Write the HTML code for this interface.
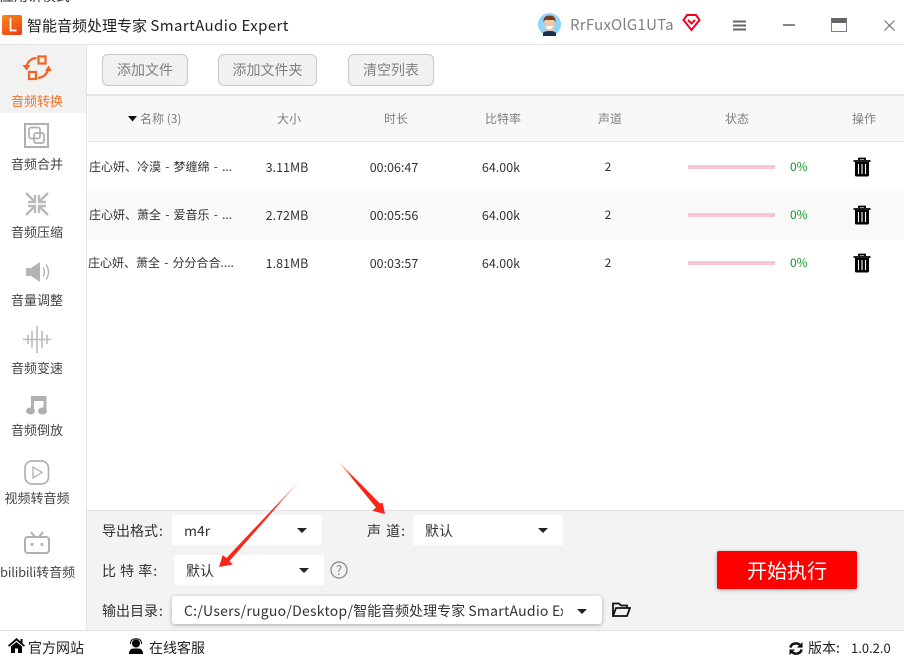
<!DOCTYPE html>
<html><head><meta charset="utf-8">
<style>
html,body{margin:0;padding:0;background:#fff}
#p{position:relative;width:904px;height:659px;overflow:hidden;background:#fff;font-family:"Noto Sans CJK SC","Liberation Sans",sans-serif;color:#333}
#p div,#p svg{position:absolute}
.t{white-space:nowrap;line-height:20px;height:20px}
.side{left:0;width:74px;text-align:center;font-size:13px;color:#444}
.th{top:109px;font-size:12px;color:#808080;text-align:center;width:60px}
.td{font-size:12px;color:#333;text-align:center}
.n{word-spacing:1.500px}
.m{font-size:12.500px}
.btn{top:54px;height:32px;background:#f1f1f1;border:1px solid #c8c8c8;border-radius:6px;box-sizing:border-box;text-align:center;line-height:31px;font-size:14px;color:#808080}
.sel{background:#fff;height:30px}
.lab{font-size:14px;color:#333}
.c{margin-left:1px}
.bar{left:688px;width:87px;height:4px;background:#f8c5d8}
.pc{left:790px;font-size:12px;color:#0a9a1a}
</style></head><body>
<div id="p">
<div class="t" style="left:0;top:-14px;font-size:14px;color:#333">应用讲模式</div>

<!-- title bar -->
<div style="left:2px;top:15px;width:20px;height:20px;background:linear-gradient(150deg,#f98a1c,#ee3a12);border-radius:2px"></div>
<svg style="left:2px;top:15px" width="20" height="20"><path d="M8.500 3V15.500H14.500" fill="none" stroke="#fff" stroke-width="1.700"/></svg>
<div class="t" style="left:27px;top:16px;font-size:15px;color:#222">智能音频处理专家 <span style="letter-spacing:.4px">SmartAudio Expert</span></div>

<svg style="left:538px;top:13px" width="23" height="23" viewBox="0 0 23 23">
<circle cx="11.500" cy="11.500" r="11.500" fill="#8fd4fb"/>
<path d="M5 23V20Q6 18 11.500 18T18 20V23Z" fill="#17304f"/>
<rect x="6.500" y="6" width="10" height="12" rx="4" fill="#f3c9a5"/>
<path d="M5.500 9Q5 2.500 11.500 2.500T17.500 9L16 7H7Z" fill="#7a3d1e"/>
<path d="M8 13H15Q14 16 11.500 16T8 13Z" fill="#fff"/>
</svg>
<div class="t" style="left:570px;top:15px;font-size:15px;color:#808080;letter-spacing:.25px">RrFuxOlG1UTa</div>
<svg style="left:682px;top:13px" width="19" height="19" viewBox="0 0 19 19"><path d="M5 2H14L17.500 7L9.500 17L1.500 7Z" fill="none" stroke="#f4001c" stroke-width="2"/><path d="M6 7L9.500 10.500L13 7" fill="none" stroke="#f4001c" stroke-width="2"/></svg>
<svg style="left:733px;top:20px" width="13" height="11"><path d="M0 1.500H13M0 5.500H13M0 9.500H13" stroke="#666" stroke-width="2"/></svg>
<div style="left:783px;top:24px;width:12px;height:2px;background:#888"></div>
<div style="left:831px;top:18px;width:16px;height:14px;box-sizing:border-box;border:1px solid #7a8290;border-top:5px solid #666"></div>
<svg style="left:884px;top:20px" width="11" height="11"><path d="M.5 .5L10.500 10.500M10.500 .5L.5 10.500" stroke="#777" stroke-width="1.200"/></svg>
<div style="left:0;top:44px;width:904px;height:1px;background:#e3e3e3"></div>

<!-- sidebar -->
<div style="left:0;top:45px;width:86px;height:68px;background:#f2f2f2"></div>
<div style="left:86px;top:45px;width:1px;height:586px;background:#e6e6e6"></div>
<svg style="left:22px;top:54px" width="31" height="27" viewBox="0 0 31 27" fill="none" stroke="#f2641f" stroke-width="2.200">
<rect x="16.500" y="2.500" width="7" height="7"/><rect x="7" y="18" width="7" height="7"/>
<path d="M14.500 4Q7 4.500 4.500 12"/><path d="M.5 11H8.500L4.500 16.500Z" fill="#f2641f" stroke="none"/>
<path d="M16 24Q24 23 26.500 15"/><path d="M26.500 11.500L30 17H23Z" fill="#f2641f" stroke="none"/>
</svg>
<div class="t side" style="top:91px;color:#f2722c">音频转换</div>

<svg style="left:24px;top:123px" width="26" height="26" viewBox="0 0 26 26" fill="none" stroke="#b0b0b0" stroke-width="1.700"><rect x="1" y="1" width="23" height="23" stroke-width="2"/><rect x="5" y="4.500" width="11" height="11" rx="2"/><rect x="10" y="10" width="10" height="10" rx="2"/></svg>
<div class="t side" style="top:154px">音频合并</div>

<svg style="left:25px;top:192px" width="24" height="24" viewBox="0 0 24 24" fill="none" stroke="#bababa" stroke-width="2.400"><path d="M1 1L9 9M10 3V10H3M23 1L15 9M14 3V10H21M1 23L9 15M10 21V14H3M23 23L15 15M14 21V14H21"/></svg>
<div class="t side" style="top:222px">音频压缩</div>

<svg style="left:26px;top:262px" width="25" height="20" viewBox="0 0 25 20" fill="none"><path d="M0 6H5L14 0V20L5 14H0Z" fill="#b4b4b4"/><path d="M17 5.500Q20 10 17 14.500M20 2.500Q25 10 20 17.500" stroke="#b4b4b4" stroke-width="1.500"/></svg>
<div class="t side" style="top:290px">音量调整</div>

<svg style="left:23px;top:326px" width="28" height="27" viewBox="0 0 28 27" fill="none" stroke="#bababa" stroke-width="1.600"><path d="M0 13.500H28M14 0V27M9 5V22M19 5V22M5 9V18M24 9V18"/></svg>
<div class="t side" style="top:358px">音频变速</div>

<svg style="left:26px;top:395px" width="22" height="20" viewBox="0 0 22 20" fill="#b0b0b0"><path d="M5 1H20.500V16H17.500V6H8V16H5Z"/><ellipse cx="4.500" cy="16" rx="4.500" ry="3.500"/><ellipse cx="16.500" cy="16" rx="4.500" ry="3.500"/></svg>
<div class="t side" style="top:420px">音频倒放</div>

<svg style="left:24px;top:460px" width="26" height="25" viewBox="0 0 26 25" fill="none" stroke="#b0b0b0" stroke-width="1.700"><rect x="1" y="1" width="23.500" height="23" rx="7"/><path d="M9 7L18 12.500L9 18Z" stroke-width="1.300"/></svg>
<div class="t side" style="top:488px">视频转音频</div>

<svg style="left:24px;top:531px" width="26" height="23" viewBox="0 0 26 23" fill="none" stroke="#b0b0b0" stroke-width="2"><rect x="1" y="6" width="24" height="16" rx="3"/><path d="M7 1L11 6M19 1L15 6"/><path d="M8 12V15M18 12V15" stroke-width="2.600"/></svg>
<div class="t side" style="top:562px"><span style="letter-spacing:-.2px">bilibili</span>转音频</div>

<!-- toolbar -->
<div class="btn" style="left:102px;width:86px">添加文件</div>
<div class="btn" style="left:218px;width:99px">添加文件夹</div>
<div class="btn" style="left:348px;width:86px">清空列表</div>
<div style="left:87px;top:94px;width:817px;height:2px;background:#e6e6e6"></div>

<!-- table -->
<div style="left:88px;top:96px;width:816px;height:45px;background:#f8f8f8"></div>
<div style="left:89px;top:141px;width:815px;height:1px;background:#e4e4e4"></div>
<div style="left:87px;top:191px;width:817px;height:48px;background:#f9f9f9"></div>
<svg style="left:128px;top:116px" width="9" height="6"><path d="M0 0H9L4.500 5.500Z" fill="#111"/></svg>
<div class="t th" style="left:140px;width:auto">名称 (3)</div>
<div class="t th" style="left:259px">大小</div>
<div class="t th" style="left:366px">时长</div>
<div class="t th" style="left:473px">比特率</div>
<div class="t th" style="left:580px">声道</div>
<div class="t th" style="left:707px">状态</div>
<div class="t th" style="left:834px">操作</div>

<div class="t td n" style="left:89px;top:157px">庄心妍、冷漠 - 梦缠绵 - ...</div>
<div class="t td m" style="left:259px;top:157px;width:56px">3.11MB</div>
<div class="t td m" style="left:364px;top:157px;width:60px">00:06:47</div>
<div class="t td m" style="left:471px;top:157px;width:60px">64.00k</div>
<div class="t td" style="left:598px;top:157px;width:20px">2</div>
<div class="bar" style="top:165px"></div><div class="t pc" style="top:157px">0%</div>

<div class="t td n" style="left:89px;top:205px">庄心妍、萧全 - 爱音乐 - ...</div>
<div class="t td m" style="left:259px;top:205px;width:56px">2.72MB</div>
<div class="t td m" style="left:364px;top:205px;width:60px">00:05:56</div>
<div class="t td m" style="left:471px;top:205px;width:60px">64.00k</div>
<div class="t td" style="left:598px;top:205px;width:20px">2</div>
<div class="bar" style="top:213px"></div><div class="t pc" style="top:205px">0%</div>

<div class="t td n" style="left:88px;top:253px">庄心妍、萧全 - 分分合合....</div>
<div class="t td m" style="left:259px;top:253px;width:56px">1.81MB</div>
<div class="t td m" style="left:364px;top:253px;width:60px">00:03:57</div>
<div class="t td m" style="left:471px;top:253px;width:60px">64.00k</div>
<div class="t td" style="left:598px;top:253px;width:20px">2</div>
<div class="bar" style="top:261px"></div><div class="t pc" style="top:253px">0%</div>

<svg style="left:853px;top:157px" width="18" height="20" viewBox="0 0 18 20"><path d="M6 3V1.500H12V3M.5 4H17.500" fill="none" stroke="#000" stroke-width="1.800"/><path d="M2 5H16V18Q16 19.500 14.500 19.500H3.500Q2 19.500 2 18Z" fill="#000"/><path d="M5.500 7V17M9 7V17M12.500 7V17" stroke="#fff" stroke-width="1.100"/></svg>
<svg style="left:853px;top:205px" width="18" height="20" viewBox="0 0 18 20"><path d="M6 3V1.500H12V3M.5 4H17.500" fill="none" stroke="#000" stroke-width="1.800"/><path d="M2 5H16V18Q16 19.500 14.500 19.500H3.500Q2 19.500 2 18Z" fill="#000"/><path d="M5.500 7V17M9 7V17M12.500 7V17" stroke="#fff" stroke-width="1.100"/></svg>
<svg style="left:853px;top:253px" width="18" height="20" viewBox="0 0 18 20"><path d="M6 3V1.500H12V3M.5 4H17.500" fill="none" stroke="#000" stroke-width="1.800"/><path d="M2 5H16V18Q16 19.500 14.500 19.500H3.500Q2 19.500 2 18Z" fill="#000"/><path d="M5.500 7V17M9 7V17M12.500 7V17" stroke="#fff" stroke-width="1.100"/></svg>

<!-- bottom panel -->
<div style="left:87px;top:510px;width:817px;height:1px;background:#e2e2e2"></div>
<div style="left:87px;top:511px;width:817px;height:119px;background:#f3f3f3"></div>
<div style="left:87px;top:630px;width:817px;height:1px;background:#e2e2e2"></div>
<div style="left:0;top:630px;width:87px;height:1px;background:#e2e2e2"></div>

<div class="t lab" style="left:102px;top:521px">导出格式<span class="c">:</span></div>
<div class="sel" style="left:172px;top:515px;width:150px"></div>
<div class="t" style="left:184px;top:521px;font-size:14px">m4r</div>
<svg style="left:297px;top:528px" width="10" height="5"><path d="M0 0H10L5 5Z" fill="#222"/></svg>

<div class="t lab" style="left:367px;top:521px;word-spacing:2px">声 道<span class="c">:</span></div>
<div class="sel" style="left:413px;top:515px;width:150px"></div>
<div class="t" style="left:425px;top:521px;font-size:14px">默认</div>
<svg style="left:538px;top:528px" width="10" height="5"><path d="M0 0H10L5 5Z" fill="#222"/></svg>

<div class="t lab" style="left:102px;top:561px;word-spacing:1px">比 特 率<span class="c">:</span></div>
<div class="sel" style="left:174px;top:555px;width:150px"></div>
<div class="t" style="left:186px;top:561px;font-size:14px">默认</div>
<svg style="left:299px;top:568px" width="10" height="5"><path d="M0 0H10L5 5Z" fill="#222"/></svg>
<svg style="left:330px;top:561px" width="18" height="18" viewBox="0 0 18 18" fill="none" stroke="#888" stroke-width="1.200"><circle cx="9" cy="9" r="8"/></svg>
<div class="t" style="left:330px;top:560px;width:18px;text-align:center;font-size:13px;color:#888">?</div>

<div class="t lab" style="left:102px;top:601px">输出目录<span class="c">:</span></div>
<div style="left:172px;top:596px;width:430px;height:28px;background:#fff;border-radius:3px;box-shadow:0 1px 4px rgba(0,0,0,.3)"></div>
<div class="t" style="left:184px;top:601px;width:379px;overflow:hidden;font-size:14px"><span style="letter-spacing:.25px">C:/Users/ruguo/Desktop/</span>智能音频处理专家 <span style="letter-spacing:.25px">SmartAudio Expert</span></div>
<svg style="left:577px;top:609px" width="10" height="5"><path d="M0 0H10L5 5Z" fill="#222"/></svg>
<svg style="left:612px;top:602px" width="19" height="15" viewBox="0 0 19 15" fill="none" stroke="#111" stroke-width="1.800"><path d="M1 14V1.500H7L9 3.500H15V6M1 14L4 6H18L15 14Z"/></svg>

<div style="left:717px;top:551px;width:140px;height:38px;background:#fe0000;border-radius:2px;box-shadow:0 1px 4px rgba(0,0,0,.3)"></div>
<div class="t" style="left:717px;top:560px;width:140px;text-align:center;font-size:20px;color:#fff">开始执行</div>

<!-- red arrows -->
<svg style="left:0;top:0" width="904" height="659" viewBox="0 0 904 659">
<defs>
<linearGradient id="g1" gradientUnits="userSpaceOnUse" x1="302" y1="478" x2="219" y2="567"><stop offset="0" stop-color="#ff2a1c" stop-opacity=".15"/><stop offset=".35" stop-color="#f8261a"/><stop offset="1" stop-color="#f8261a"/></linearGradient>
<linearGradient id="g2" gradientUnits="userSpaceOnUse" x1="337" y1="460" x2="385" y2="514"><stop offset="0" stop-color="#ff2a1c" stop-opacity=".15"/><stop offset=".35" stop-color="#f8261a"/><stop offset="1" stop-color="#f8261a"/></linearGradient>
</defs>
<path d="M302 478L229.500 561L232.700 564.500L219 567L222.700 555L226.500 558Z" fill="url(#g1)"/>
<path d="M337 460L380 503.500L382.700 502.700L385 514L372.300 510.700L376 507.500Z" fill="url(#g2)"/>
</svg>

<!-- footer -->
<svg style="left:8px;top:638px" width="17" height="15" viewBox="0 0 17 15"><path d="M8.500 0L17 7.500L15.800 8.700L8.500 2.500L1.200 8.700L0 7.500Z" fill="#000"/><path d="M3 8.500L8.500 4L14 8.500V15H10V10.500H7V15H3Z" fill="#000"/><rect x="12.500" y="1" width="2" height="4" fill="#000"/></svg>
<div class="t" style="left:28px;top:638px;font-size:14px;color:#222">官方网站</div>
<svg style="left:128px;top:638px" width="16" height="16" viewBox="0 0 16 16"><circle cx="8" cy="5.500" r="4" fill="#000"/><path d="M1 16Q1 11 5 10.500H11Q15 11 15 16Z" fill="#000"/><path d="M2.500 6Q2.500 .8 8 .8T13.500 6" fill="none" stroke="#000" stroke-width="1"/></svg>
<div class="t" style="left:149px;top:638px;font-size:14px;color:#222">在线客服</div>
<svg style="left:788px;top:641px" width="16" height="15" viewBox="0 0 16 16" fill="none" stroke="#111" stroke-width="2.600"><path d="M2 7Q3 2.500 8 2.500Q11 2.500 13 5"/><path d="M14 9Q13 13.500 8 13.500Q5 13.500 3 11"/><path d="M15 1V7H9Z" fill="#111" stroke="none"/><path d="M1 15V9H7Z" fill="#111" stroke="none"/></svg>
<div class="t" style="left:808px;top:638px;font-size:14px;color:#222">版本:</div>
<div class="t" style="left:851px;top:638px;font-size:13px;color:#222">1.0.2.0</div>
</div>
</body></html>
